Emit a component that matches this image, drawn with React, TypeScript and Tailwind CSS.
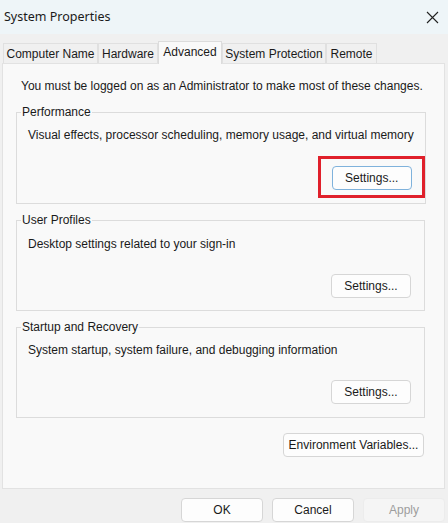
import type { ReactNode } from 'react'

const TABS = [
  { label: 'Computer Name', w: 'w-[95px]' },
  { label: 'Hardware', w: 'w-[60px]' },
  { label: 'Advanced', w: 'w-[64px]', active: true },
  { label: 'System Protection', w: 'w-[104px]' },
  { label: 'Remote', w: 'w-[51px]' },
]

function WinButton({ children, className = '', focused = false, disabled = false }: { children: ReactNode; className?: string; focused?: boolean; disabled?: boolean }) {
  return (
    <button
      className={`h-6 rounded-[4px] border text-[12px] leading-none ${
        focused
          ? 'border-[#7fb2dc] bg-[#fdfdfd] text-[#1a1a1a]'
          : disabled
          ? 'border-[#ececec] bg-[#f5f5f5] text-[#9d9d9d]'
          : 'border-[#d6d6d6] bg-[#fdfdfd] text-[#1a1a1a]'
      } ${className}`}
    >
      {children}
    </button>
  )
}

function GroupBox({ title, text, children, pt, pb }: { title: string; text: string; children: ReactNode; pt: string; pb: string }) {
  return (
    <fieldset className={`ml-[13px] mr-[19px] border border-[#dcdcdc] px-[11px] ${pb}`}>
      <legend className="-ml-[7px] px-[1px] text-[12px] leading-4 text-[#1a1a1a]">{title}</legend>
      <div className={`${pt} whitespace-nowrap text-[12px] leading-4 text-[#1a1a1a]`}>{text}</div>
      <div className="mt-[22px] flex justify-end pr-[2px]">{children}</div>
    </fieldset>
  )
}

export default function App() {
  return (
    <div className="flex h-[523px] w-[448px] flex-col overflow-hidden bg-[#f0f0f0] font-['Liberation_Sans',Arial,sans-serif]">
      {/* Title bar */}
      <div className="flex h-[34px] items-center justify-between bg-[#eef5f8] pl-[4px] pr-[8px]">
        <span className="font-['Noto_Sans',sans-serif] text-[12.5px] text-[#1a1a1a]">System Properties</span>
        <svg width="13" height="13" viewBox="0 0 13 13" className="mr-[1px] mt-[1px]">
          <path d="M1 1 L12 12 M12 1 L1 12" stroke="#222" strokeWidth="1.1" fill="none" />
        </svg>
      </div>

      {/* Tabs */}
      <div className="mt-[7px] flex h-[22px] items-end pl-[3px]">
        {TABS.map(t => (
          <div
            key={t.label}
            className={`flex ${t.w} items-center justify-center border-x border-t text-[12px] text-[#1a1a1a] ${
              t.active
                ? 'relative z-10 -mb-px h-[23px] border-[#dcdcdc] bg-[#f9f9f9] pb-[2px]'
                : 'h-5 border-[#e0e0e0] bg-[#f0f0f0]'
            }`}
          >
            {t.label}
          </div>
        ))}
      </div>

      {/* Panel */}
      <div className="mx-[2px] flex h-[426px] w-[443px] flex-col border border-[#e2e2e2] bg-[#f9f9f9]">
        <p className="ml-[18px] mt-[14px] text-[12px] leading-4 text-[#1a1a1a]">
          You must be logged on as an Administrator to make most of these changes.
        </p>

        <div className="mt-[10px]">
          <GroupBox title="Performance" text="Visual effects, processor scheduling, memory usage, and virtual memory" pt="pt-[7px]" pb="pb-[13px]">
            <div className="relative">
              <WinButton focused className="w-20">Settings...</WinButton>
              <div className="pointer-events-none absolute -bottom-[8px] -left-[14px] -right-[13px] -top-[9px] border-[3px] border-[#e0202b]" />
            </div>
          </GroupBox>
        </div>

        <div className="mt-[8px]">
          <GroupBox title="User Profiles" text="Desktop settings related to your sign-in" pt="pt-[8px]" pb="pb-[12px]">
            <WinButton className="w-20">Settings...</WinButton>
          </GroupBox>
        </div>

        <div className="mt-[8px]">
          <GroupBox title="Startup and Recovery" text="System startup, system failure, and debugging information" pt="pt-[7px]" pb="pb-[13px]">
            <WinButton className="w-20">Settings...</WinButton>
          </GroupBox>
        </div>

        <div className="mt-[15px] flex justify-end pr-[20px]">
          <WinButton className="w-[141px]">Environment Variables...</WinButton>
        </div>
      </div>

      {/* Dialog buttons */}
      <div className="mt-[9px] flex justify-end gap-[9px] pr-[3px]">
        <WinButton className="w-[82px]">OK</WinButton>
        <WinButton className="w-[82px]">Cancel</WinButton>
        <WinButton disabled className="w-[82px]">Apply</WinButton>
      </div>
    </div>
  )
}
